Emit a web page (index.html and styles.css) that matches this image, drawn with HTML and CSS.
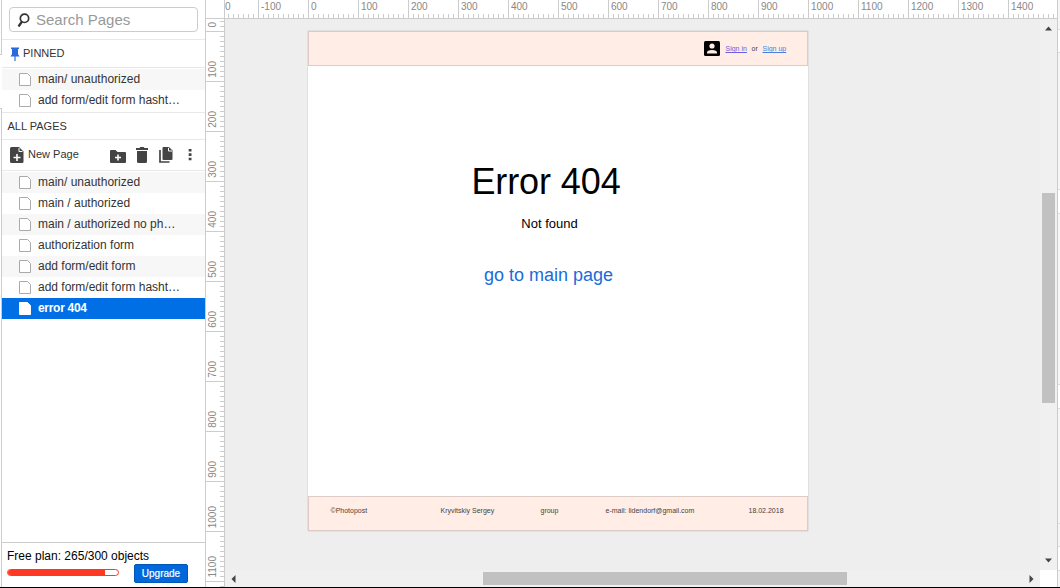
FILE: index.html
```
<!DOCTYPE html>
<html lang="en">
<head>
<meta charset="utf-8">
<title>Error 404 mockup</title>
<link rel="stylesheet" href="styles.css">
</head>
<body>
<svg width="0" height="0" class="defs">
  <symbol id="page" viewBox="0 0 14 15"><path d="M1.500 1.500h8l3 3v9h-11z"/></symbol>
</svg>
<div class="app">
  <aside class="side">
    <div class="search-wrap"><div class="search">
      <svg width="14" height="16" viewBox="0 0 14 16"><circle cx="7.500" cy="6.300" r="4.200" fill="none" stroke="#333" stroke-width="1.700"/><path d="M5 9.500L1.500 14.500" stroke="#333" stroke-width="2.200"/></svg>
      <span>Search Pages</span></div></div>
    <div class="title pinned"><svg width="10" height="15" viewBox="0 0 10 15"><path d="M1 0.500h8v1.500h-1v5l1.500 2.500h-9L2 7V2H1z" fill="#2a6bdc"/><path d="M5 9v5" stroke="#2a6bdc" stroke-width="1.200"/></svg><span>PINNED</span></div>
    <ul class="pages">
      <li><svg><use href="#page"/></svg><span>main/ unauthorized</span></li>
      <li><svg><use href="#page"/></svg><span>add form/edit form hasht…</span></li>
    </ul>
    <div class="title all">ALL PAGES</div>
    <div class="tools">
      <svg class="t-new" width="14" height="16" viewBox="0 0 14 16"><path d="M1.500 0h7.500l4.500 4.500V14.500q0 1.500-1.500 1.500H1.500Q0 16 0 14.500v-13Q0 0 1.500 0z" fill="#444"/><path d="M9 1v3.500h3.500" stroke="#fff" fill="none"/><path d="M7 7v7M3.500 10.500h7" stroke="#fff" stroke-width="1.600"/></svg>
      <span class="t-label">New Page</span>
      <svg class="t-folder" width="16" height="13" viewBox="0 0 16 13"><path d="M0 1q0-1 1-1h4.500l2 2H15q1 0 1 1v9q0 1-1 1H1q-1 0-1-1z" fill="#444"/><path d="M8 4.500v6M5 7.500h6" stroke="#fff" stroke-width="1.600"/></svg>
      <svg class="t-trash" width="12" height="16" viewBox="0 0 12 16"><path d="M0 1h3.500l.8-1h3.400l.8 1H12v2H0zM1 4h10v10.500q0 1.500-1.500 1.500h-7Q1 16 1 14.500z" fill="#444"/></svg>
      <svg class="t-copy" width="14" height="16" viewBox="0 0 14 16"><path d="M4.500 0h5.500l3.500 3.500V12q0 1-1 1h-8q-1 0-1-1V1q0-1 1-1z" fill="#444"/><path d="M9.500.8V4h3.500" stroke="#fff" fill="none"/><path d="M1 3v12h9.500" stroke="#444" stroke-width="1.700" fill="none"/></svg>
      <svg class="t-more" width="4" height="12" viewBox="0 0 4 12"><path d="M.7 0h2.800v2.600H.7zM.7 4.300h2.800v2.600H.7zM.7 8.700h2.800v2.600H.7z" fill="#444"/></svg>
    </div>
    <ul class="pages">
      <li><svg><use href="#page"/></svg><span>main/ unauthorized</span></li>
      <li><svg><use href="#page"/></svg><span>main / authorized</span></li>
      <li><svg><use href="#page"/></svg><span>main / authorized no ph…</span></li>
      <li><svg><use href="#page"/></svg><span>authorization form</span></li>
      <li><svg><use href="#page"/></svg><span>add form/edit form</span></li>
      <li><svg><use href="#page"/></svg><span>add form/edit form hasht…</span></li>
      <li class="active"><svg><use href="#page"/></svg><span>error 404</span></li>
    </ul>
    <div class="plan">
      <div class="plan-text">Free plan: 265/300 objects</div>
      <div class="plan-row"><div class="meter"><div class="fill" style="width:88.300%"></div></div><button class="upgrade">Upgrade</button></div>
    </div>
  </aside>
  <main class="work">
    <div class="hrow"><div class="corner"></div><div class="hruler">
      <div class="cells"><i class="partial">0</i><i>-100</i><i>0</i><i>100</i><i>200</i><i>300</i><i>400</i><i>500</i><i>600</i><i>700</i><i>800</i><i>900</i><i>1000</i><i>1100</i><i>1200</i><i>1300</i><i>1400</i></div></div></div>
    <div class="lower">
      <div class="vruler"><div class="vcells"><i><b>0</b></i><i><b>100</b></i><i><b>200</b></i><i><b>300</b></i><i><b>400</b></i><i><b>500</b></i><i><b>600</b></i><i><b>700</b></i><i><b>800</b></i><i><b>900</b></i><i><b>1000</b></i><i><b>1100</b></i><i></i></div></div>
      <div class="view">
        <div class="canvas">
          <div class="sheet">
            <header class="bar top">
              <svg width="16" height="15" viewBox="0 0 16 15"><rect width="16" height="15" rx="1.500"/><circle cx="8" cy="5" r="2.600" fill="#ffede6"/><path d="M3 12.500v-1Q3 9 8 9t5 2.500v1z" fill="#ffede6"/></svg>
              <a class="signin">Sign in</a><span class="or">or</span><a class="signup">Sign up</a>
            </header>
            <section class="body">
              <h1><span>Error 404</span></h1>
              <p class="nf"><span>Not found</span></p>
              <p class="go"><a>go to main page</a></p>
            </section>
            <footer class="bar foot"><span class="f1">©Photopost</span><span class="f2">Kryvitskiy Sergey</span><span class="f3">group</span><span class="f4">e-mail: lidendorf@gmail.com</span><span class="f5">18.02.2018</span></footer>
          </div>
        </div>
        <div class="vscroll"><svg width="7" height="5"><path d="M0 4.500L3.500 0.500L7 4.500z" fill="#444"/></svg><div class="vthumb"></div><svg width="7" height="5"><path d="M0 .5L3.500 4.500L7 .5z" fill="#444"/></svg></div>
        <div class="hscroll"><svg width="5" height="8"><path d="M4.500 0L.5 4L4.500 8z" fill="#444"/></svg><div class="hthumb"></div><svg width="5" height="8"><path d="M.5 0L4.500 4L.5 8z" fill="#444"/></svg></div>
        <div></div>
      </div>
    </div>
  </main>
  <div class="edge"></div>
</div>
</body>
</html>
```

FILE: styles.css
```
* { box-sizing: border-box; }
body { margin: 0; font-family: "Liberation Sans", Arial, sans-serif; background: #fff; overflow: hidden; }
.defs { position: absolute; }
svg { display: block; flex: none; }
.app { display: flex; width: 1060px; height: 588px; border-bottom: 1px solid #000; }
.side {
  width: 205px; padding-left: 2px; flex: none; display: flex; flex-direction: column; font-size: 12px; color: #333;
  background:
    linear-gradient(#ccc, #ccc) 0 54px / 2px 1px no-repeat,
    linear-gradient(#ccc, #ccc) 0 108px / 2px 1px no-repeat,
    linear-gradient(#ccc 54px, transparent 54px 108px, #ccc 108px) 1px 0 / 1px 100% no-repeat;
}
.search-wrap { height: 40px; padding: 7px 0 0 7px; border-bottom: 1px solid #e8e8e8; }
.search { width: 189px; height: 25px; border: 1px solid #ccc; border-radius: 4px; display: flex; align-items: center; padding-left: 7px; font-size: 15px; color: #999; gap: 5px; }
.title { display: flex; align-items: center; color: #333; font-size: 11px; }
.pinned { height: 28px; padding: 0 0 1px 8px; gap: 3px; border-bottom: 1px solid #e8e8e8; }
.pinned svg { margin-top: 2px; }
.all { height: 28px; margin-top: 1px; padding: 0 0 0 5.500px; border-top: 1px solid #e8e8e8; border-bottom: 1px solid #e8e8e8; }
.pages { list-style: none; margin: 0; padding: 1px 0 0; }
.pages li { height: 21px; display: flex; align-items: center; padding: 0 0 1px 16px; white-space: nowrap; }
.pages li:nth-child(odd) { background: #f7f7f7; }
.pages li svg { width: 14px; height: 15px; margin: 1px 6px 0 0; fill: #fff; stroke: #aaa; }
.pages li span { padding-bottom: 1px; }
.pages li:nth-child(1n).active { background: #006fe6; color: #fff; font-weight: bold; letter-spacing: -.3px; }
.pages .active svg { stroke: #fff; }
.tools { height: 31px; display: flex; align-items: center; padding-left: 8px; border-bottom: 1px solid #e8e8e8; font-size: 11px; }
.t-label { width: 82px; margin-left: 4px; flex: none; padding-bottom: 2px; }
.t-folder { margin-top: 3px; }
.t-trash { margin-left: 10px; }
.t-copy { margin-left: 11px; }
.t-more { margin-left: 15px; }
.plan { margin-top: auto; height: 45px; border-top: 1px solid #ccc; padding: 6px 0 0 5px; color: #000; }
.plan-text { line-height: 14px; }
.plan-row { display: flex; align-items: flex-start; margin-top: 1px; }
.meter { width: 112px; height: 7px; margin-top: 5px; border: 1px solid #ff3824; border-radius: 4px; overflow: hidden; }
.fill { height: 100%; background: #ff3824; }
.upgrade { width: 54px; height: 19px; margin-left: 15px; padding: 0; border: 1px solid #0057b8; border-radius: 2px; background: #0068da; color: #fff; font: 10px "Liberation Sans", Arial, sans-serif; -webkit-text-stroke: .2px #fff; }
.work { flex: 1; min-width: 0; display: flex; flex-direction: column; border-left: 1px solid #ccc; border-right: 1px solid #ccc; }
.hrow { display: flex; height: 19px; border-bottom: 1px solid #ccc; }
.corner { width: 19px; flex: none; border-right: 1px solid #ccc; }
.hruler { flex: 1; min-width: 0; overflow: hidden; }
.cells { display: flex; height: 18px; margin-left: -17px; }
.cells i { flex: 0 0 50px; border-left: 1px solid #ccc; padding-left: 2px; font: 10px/14px "Liberation Sans", Arial, sans-serif; color: #888; background: repeating-linear-gradient(to right, transparent 0 4px, #ccc 4px 5px) 0 14px / 100% 4px no-repeat; }
.cells .partial { padding-left: 16px; }
.lower { display: flex; flex: 1; min-height: 0; }
.vruler { width: 19px; flex: none; overflow: hidden; border-right: 1px solid #ccc; }
.vcells { margin-top: -37px; }
.vcells i { display: flex; height: 50px; border-bottom: 1px solid #ccc; align-items: flex-end; padding: 0 0 3px 0; font: 10px/14px "Liberation Sans", Arial, sans-serif; color: #888; background: repeating-linear-gradient(to bottom, transparent 0 4px, #ccc 4px 5px) 14px 0 / 4px 100% no-repeat; }
.vcells b { font-weight: normal; writing-mode: vertical-rl; transform: rotate(180deg); line-height: 14px; }
.view { flex: 1; min-width: 0; display: grid; grid-template: 551px 17px / 815px 17px; }
.canvas { background: #eee; padding: 12px 0 0 83px; }
.sheet { width: 500px; height: 500px; background: #fff; display: flex; flex-direction: column; box-shadow: 0 0 1px #999; }
.bar { display: flex; align-items: center; height: 35px; background: #ffede6; border: 1px solid #dccbc6; font-size: 7px; color: #444; white-space: nowrap; flex: none; }
.top { padding-left: 395px; }
.top a { color: #4a7fe0; text-decoration: underline; }
.signin { margin-left: 5.500px; width: 26px; color: #6a60dc !important; }
.or { width: 11px; }
.body { flex: 1; text-align: center; padding-top: 94px; color: #000; }
.body h1, .body p { margin: 0; font-weight: normal; }
.body h1 { font-size: 36px; line-height: 44px; padding-right: 24px; letter-spacing: -.1px; }
.nf { font-size: 13px; line-height: 18px; margin-top: 11px !important; padding-right: 17px; }
.go { font-size: 18px; line-height: 24px; margin-top: 30px !important; padding-right: 19px; color: #1a6bdc; }
.foot { padding: 0 0 6px 21.500px; }
.f1 { width: 110px; }
.f2 { width: 100px; }
.f3 { width: 65px; }
.f4 { width: 143px; }
.vscroll { background: #f0f0f0; display: flex; flex-direction: column; align-items: center; padding: 7px 0 7px; }
.vthumb { width: 13px; height: 210px; background: #c1c1c1; margin: 162px 0 auto; }
.hscroll { background: #f0f0f0; display: flex; align-items: center; padding: 0 6px 0 6px; }
.hthumb { width: 364px; height: 13px; background: #c1c1c1; margin-left: 247px; margin-right: auto; }
.edge { width: 2px; flex: none; background: linear-gradient(#f7f7f7 29px, #ddd 29px 30px, #fff 30px 52px, #ddd 52px 53px, #f7f7f7 53px 189px, #ddd 189px 190px, #fff 190px 213px, #ddd 213px 214px, #f7f7f7 214px 384px, #ddd 384px 385px, #fff 385px 408px, #ddd 408px 409px, #f7f7f7 409px 523px, #ddd 523px 524px, #f7f7f7 524px 546px, #ddd 546px 547px, #fff 547px 570px, #ddd 570px 571px, #f7f7f7 571px); }
```
